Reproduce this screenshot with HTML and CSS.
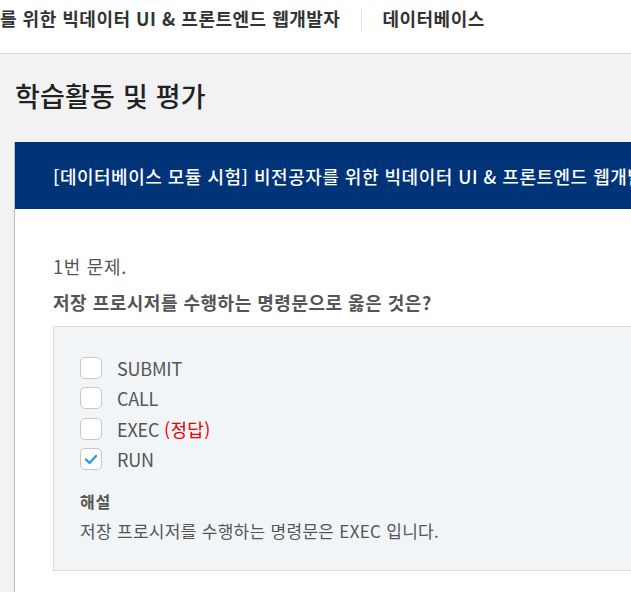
FILE: index.html
```html
<!DOCTYPE html>
<html lang="ko">
<head>
<meta charset="utf-8">
<title>학습활동 및 평가</title>
<link rel="stylesheet" href="styles.css">
</head>
<body>
<header class="topbar">
  <span class="course">를 위한 빅데이터 UI &amp; 프론트엔드 웹개발자</span>
  <span class="sep"></span>
  <span class="module">데이터베이스</span>
</header>
<main class="page">
  <h1 class="page-title">학습활동 및 평가</h1>
  <section class="card">
    <div class="card-head">[데이터베이스 모듈 시험] 비전공자를 위한 빅데이터 UI &amp; 프론트엔드 웹개발</div>
    <div class="card-body">
      <p class="q-num">1번 문제.</p>
      <p class="q-text">저장 프로시저를 수행하는 명령문으로 옳은 것은?</p>
      <div class="answer-box">
        <ul class="options">
          <li class="option"><span class="check"></span><span class="label">SUBMIT</span></li>
          <li class="option"><span class="check"></span><span class="label">CALL</span></li>
          <li class="option"><span class="check"></span><span class="label">EXEC <em class="correct">(정답)</em></span></li>
          <li class="option"><span class="check checked"><svg viewBox="0 0 22 22" width="22" height="22"><path d="M6 11.5 L9.5 15 L16 8" fill="none" stroke="#2b9ae8" stroke-width="2.4" stroke-linecap="round" stroke-linejoin="round"/></svg></span><span class="label">RUN</span></li>
        </ul>
        <p class="exp-title">해설</p>
        <p class="exp-text">저장 프로시저를 수행하는 명령문은 EXEC 입니다.</p>
      </div>
    </div>
  </section>
</main>
</body>
</html>
```
FILE: styles.css
```css
html, body {
  margin: 0;
  padding: 0;
  overflow: hidden;
}
body {
  background: #f2f2f2;
  font-family: "Noto Sans CJK KR", "Noto Sans", sans-serif;
  color: #333;
  width: 631px;
  height: 592px;
}
.topbar {
  background: #fff;
  border-bottom: 1px solid #d6d6d6;
  display: flex;
  align-items: flex-start;
  padding-top: 6px;
  box-sizing: border-box;
  height: 54px;
  white-space: nowrap;
}
.course, .module {
  font-size: 18px;
  font-weight: 700;
  letter-spacing: 0.5px;
  line-height: 24px;
  color: #333;
}
.sep {
  width: 1px;
  height: 22px;
  background: #e2e2e2;
  margin: 3px 20px 0 21px;
}
.page {
  padding-left: 14px;
}
.page-title {
  margin: 0;
  padding: 24px 0 0 1px;
  height: 88px;
  box-sizing: border-box;
  font-size: 27px;
  font-weight: 500;
  letter-spacing: 0.2px;
  line-height: 36px;
  color: #222;
}
.card {
  width: 900px;
  background: #fff;
  border-left: 1px solid #b9bccb;
  height: 460px;
}
.card-head {
  background: #003478;
  color: #fff;
  height: 67px;
  display: flex;
  align-items: center;
  padding-left: 38px;
  font-size: 18px;
  font-weight: 500;
  letter-spacing: 0.5px;
  white-space: nowrap;
  overflow: hidden;
}
.card-body {
  padding: 45px 0 0 38px;
}
.q-num {
  margin: 0;
  font-size: 18px;
  letter-spacing: 0.7px;
  line-height: 24px;
  color: #555;
}
.q-text {
  margin: 12px 0 0;
  font-size: 18px;
  font-weight: 700;
  letter-spacing: 0.5px;
  line-height: 24px;
  color: #555;
}
.answer-box {
  margin-top: 12px;
  background: #f2f5f8;
  border: 1px solid #dcdcdc;
  height: 245px;
  box-sizing: border-box;
  padding: 30px 26px 0;
}
.options {
  list-style: none;
  margin: 0;
  padding: 0;
  display: flex;
  flex-direction: column;
  gap: 8.3px;
}
.option {
  display: flex;
  align-items: center;
  gap: 15px;
  height: 22px;
}
.check {
  width: 22px;
  height: 22px;
  box-sizing: border-box;
  border: 1px solid #c8c8c8;
  border-radius: 5px;
  background: #fff;
  display: flex;
  align-items: center;
  justify-content: center;
}
.check svg {
  display: block;
  flex: none;
}
.label {
  font-size: 18px;
  letter-spacing: -0.2px;
  line-height: 22px;
  color: #555;
}
.correct {
  font-style: normal;
  letter-spacing: 0.3px;
  color: #ee0000;
}
.exp-title {
  margin: 19px 0 0;
  font-size: 16px;
  font-weight: 700;
  letter-spacing: 0.8px;
  line-height: 24px;
  color: #555;
}
.exp-text {
  margin: 6px 0 0;
  font-size: 17px;
  letter-spacing: 0.3px;
  line-height: 24px;
  color: #555;
}
```
